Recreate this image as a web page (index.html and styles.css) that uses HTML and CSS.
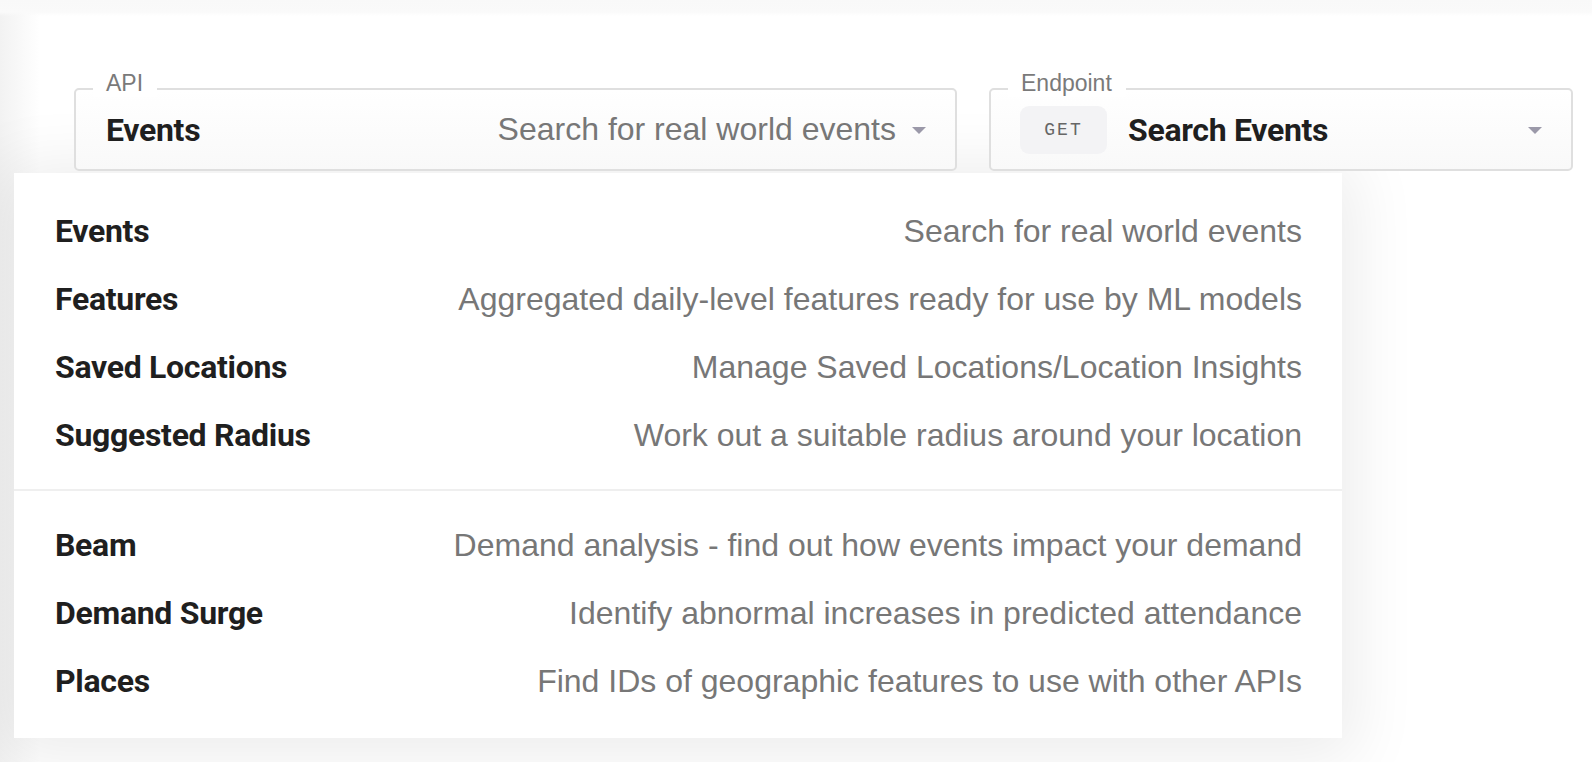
FILE: index.html
```html
<!DOCTYPE html>
<html lang="en">
<head>
<meta charset="utf-8">
<title>API Explorer</title>
<link rel="stylesheet" href="styles.css">
</head>
<body>
<div class="page">
  <div class="selectors">
    <div class="field field-api">
      <span class="field-label">API</span>
      <span class="value-name">Events</span>
      <span class="value-desc">Search for real world events</span>
      <svg class="caret" width="14" height="7" viewBox="0 0 14 7"><path d="M0 0h14L7 7z" fill="#9b99a9"/></svg>
    </div>
    <div class="field field-endpoint">
      <span class="field-label">Endpoint</span>
      <span class="badge">GET</span>
      <span class="value-name">Search Events</span>
      <svg class="caret" width="14" height="7" viewBox="0 0 14 7"><path d="M0 0h14L7 7z" fill="#9b99a9"/></svg>
    </div>
  </div>
  <div class="menu">
    <ul class="group">
      <li class="item"><span class="item-name">Events</span><span class="item-desc">Search for real world events</span></li>
      <li class="item"><span class="item-name">Features</span><span class="item-desc">Aggregated daily-level features ready for use by ML models</span></li>
      <li class="item"><span class="item-name">Saved Locations</span><span class="item-desc">Manage Saved Locations/Location Insights</span></li>
      <li class="item"><span class="item-name">Suggested Radius</span><span class="item-desc">Work out a suitable radius around your location</span></li>
    </ul>
    <ul class="group">
      <li class="item"><span class="item-name">Beam</span><span class="item-desc">Demand analysis - find out how events impact your demand</span></li>
      <li class="item"><span class="item-name">Demand Surge</span><span class="item-desc">Identify abnormal increases in predicted attendance</span></li>
      <li class="item"><span class="item-name">Places</span><span class="item-desc">Find IDs of geographic features to use with other APIs</span></li>
    </ul>
  </div>
</div>
</body>
</html>
```

FILE: styles.css
```css
html, body {
  margin: 0;
  padding: 0;
  background: #ffffff;
}

body {
  font-family: "Liberation Sans", Arial, sans-serif;
  color: #222222;
  overflow: hidden;
}

.page {
  width: 1592px;
  height: 762px;
  box-sizing: border-box;
  padding-top: 88px;
  background:
    linear-gradient(to bottom, #f9f9f9 0, #fafafa 12px, rgba(255,255,255,0) 16px),
    linear-gradient(to right, #f2f2f2 0, rgba(255,255,255,0) 40px),
    #ffffff;
}

.selectors {
  display: flex;
  gap: 32px;
  padding-left: 74px;
}

.field {
  position: relative;
  box-sizing: border-box;
  height: 83px;
  border: 2px solid #dfdfdf;
  border-radius: 5px;
  background: linear-gradient(to bottom, #ffffff, #f9f9f9);
  display: flex;
  align-items: center;
}

.field-api {
  width: 883px;
  padding: 0 29px 0 30px;
}

.field-endpoint {
  width: 584px;
  padding: 0 29px 0 29px;
}

.field-label {
  position: absolute;
  top: -21px;
  left: 17px;
  padding: 0 14px 0 13px;
  background: #ffffff;
  font-size: 23px;
  line-height: 28px;
  color: #7a7a7a;
}

.value-name {
  font-family: Roboto, "Liberation Sans", sans-serif;
  font-weight: 700;
  font-size: 32px;
  letter-spacing: -0.3px;
  color: #1f1f1f;
}

.value-desc {
  margin-left: auto;
  font-size: 32px;
  color: #777777;
}

.caret {
  flex: none;
  margin-left: 16px;
  margin-top: 2px;
}

.field-endpoint .caret {
  margin-left: auto;
}

.badge {
  box-sizing: border-box;
  width: 87px;
  height: 48px;
  border-radius: 9px;
  background: #f3f3f5;
  display: flex;
  align-items: center;
  justify-content: center;
  font-family: "Liberation Mono", monospace;
  font-size: 18px;
  letter-spacing: 2px;
  color: #666666;
  margin-right: 21px;
}

.menu {
  margin: 2px 0 0 14px;
  width: 1328px;
  background: #ffffff;
  box-shadow: 0 6px 60px 14px rgba(0, 0, 0, 0.075);
}

.group {
  list-style: none;
  margin: 0;
  padding: 24px 40px 20px 41px;
}

.group + .group {
  border-top: 2px solid #efefef;
  padding-top: 20px;
  padding-bottom: 23px;
}

.item {
  height: 68px;
  display: flex;
  align-items: center;
  justify-content: space-between;
}

.item-name {
  font-family: Roboto, "Liberation Sans", sans-serif;
  font-weight: 700;
  font-size: 32px;
  letter-spacing: -0.3px;
  color: #1f1f1f;
}

.item-desc {
  font-size: 32px;
  color: #777777;
}
```
